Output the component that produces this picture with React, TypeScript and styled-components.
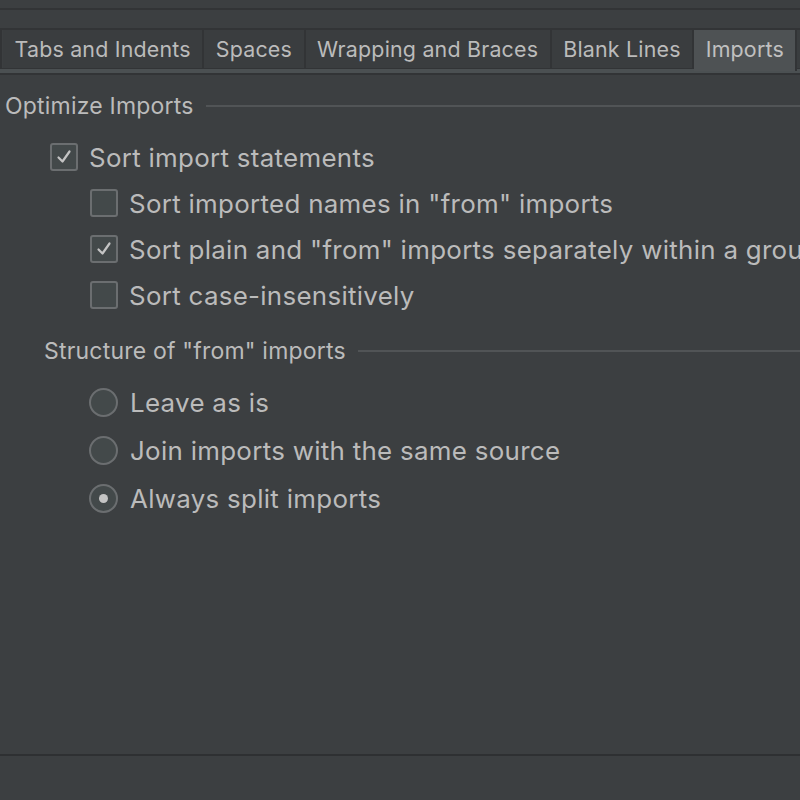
import styled, { createGlobalStyle } from 'styled-components';

const GlobalStyle = createGlobalStyle`
    html, body {
        margin: 0;
        padding: 0;
        background: #3c3f41;
    }
`;

const tabs = ['Tabs and Indents', 'Spaces', 'Wrapping and Braces', 'Blank Lines', 'Imports', ''];

const sortOptions = [
    { label: 'Sort imported names in "from" imports', checked: false },
    { label: 'Sort plain and "from" imports separately within a group', checked: true },
    { label: 'Sort case-insensitively', checked: false },
];

const structureOptions = [
    { label: 'Leave as is', selected: false },
    { label: 'Join imports with the same source', selected: false },
    { label: 'Always split imports', selected: true },
];

function CheckMark() {
    return (
        <svg width="18" height="18" viewBox="0 0 18 18">
            <path d="M3.5 9.5 L7.5 13.5 L14.5 3.5" fill="none" stroke="#c4c4c4" strokeWidth="2.2" strokeLinecap="round" strokeLinejoin="round" />
        </svg>
    );
}

function App() {
    return (
        <Page>
            <GlobalStyle />
            <TopRule />
            <TabStrip>
                {tabs.map((t, i) => (
                    <Tab key={i} $selected={t === 'Imports'}>{t}</Tab>
                ))}
            </TabStrip>
            <TabUnderline />

            <Content>
                <Group>
                    <GroupTitle>Optimize Imports</GroupTitle>
                    <GroupLine />
                </Group>

                <MainOption>
                    <OptionRow $indent={50}>
                        <CheckBox><CheckMark /></CheckBox>
                        <Label>Sort import statements</Label>
                    </OptionRow>
                </MainOption>
                <SubOptions>
                    {sortOptions.map((o) => (
                        <OptionRow key={o.label} $indent={90}>
                            <CheckBox>{o.checked && <CheckMark />}</CheckBox>
                            <Label>{o.label}</Label>
                        </OptionRow>
                    ))}
                </SubOptions>

                <SubGroup>
                    <GroupTitle>Structure of "from" imports</GroupTitle>
                    <GroupLine />
                </SubGroup>

                <RadioList>
                    {structureOptions.map((o) => (
                        <OptionRow key={o.label} $indent={89}>
                            <Radio>{o.selected && <RadioDot />}</Radio>
                            <Label>{o.label}</Label>
                        </OptionRow>
                    ))}
                </RadioList>
            </Content>

            <BottomRule />
        </Page>
    );
}

const Page = styled.div`
    width: 800px;
    height: 800px;
    overflow: hidden;
    background: #3c3f41;
    color: #bbbbbb;
    font-family: Inter, "Liberation Sans", sans-serif;
    display: flex;
    flex-direction: column;
`;

const TopRule = styled.div`
    margin-top: 8px;
    height: 2px;
    background: #323436;
`;

const TabStrip = styled.div`
    margin-top: 18px;
    display: flex;
    height: 38px;
    border-top: 2px solid #323436;
    padding-left: 1px;
    border-left: 2px solid #323436;
`;

const Tab = styled.div<{ $selected: boolean }>`
    display: flex;
    align-items: center;
    box-sizing: border-box;
    padding: 0 11.5px ${(p) => (p.$selected ? 3 : 0)}px;
    height: ${(p) => (p.$selected ? 41 : 38)}px;
    background: ${(p) => (p.$selected ? '#4e5254' : '#3a3d3f')};
    border-right: 2px solid #323436;
    font-size: 21.4px;
    letter-spacing: 0.2px;
    color: ${(p) => (p.$selected ? '#c0c0c0' : '#bbbbbb')};
    white-space: nowrap;
    flex-shrink: 0;
    min-width: 60px;
    position: relative;
    z-index: 1;
`;

const TabUnderline = styled.div`
    height: 4px;
    background: #4b5052;
    border-top: 1px solid #323436;
    border-bottom: 2px solid #323436;
`;

const Content = styled.div`
    flex: 1;
    display: flex;
    flex-direction: column;
    padding-top: 17px;
`;

const Group = styled.div`
    display: flex;
    align-items: center;
    padding-left: 5px;
    height: 28px;
`;

const SubGroup = styled(Group)`
    padding-left: 44px;
    margin-top: 19px;
`;

const GroupTitle = styled.span`
    font-size: 23px;
    letter-spacing: 0.2px;
    white-space: nowrap;
`;

const GroupLine = styled.div`
    flex: 1;
    height: 2px;
    background: #515456;
    margin-left: 12px;
`;

const MainOption = styled.div`
    margin-top: 14px;
`;

const OptionRow = styled.div<{ $indent: number }>`
    display: flex;
    align-items: center;
    gap: 11px;
    height: 46px;
    padding-left: ${(p) => p.$indent}px;
    white-space: nowrap;
`;

const SubOptions = styled.div`
    display: flex;
    flex-direction: column;
`;

const RadioList = styled.div`
    display: flex;
    flex-direction: column;
    gap: 2px;
    margin-top: 14px;
`;

const Label = styled.span`
    font-size: 25.9px;
    letter-spacing: 0.3px;
`;

const CheckBox = styled.div`
    width: 24px;
    height: 24px;
    flex-shrink: 0;
    border: 2px solid #6b6e70;
    border-radius: 3px;
    background: #43494a;
    display: flex;
    align-items: center;
    justify-content: center;
`;

const Radio = styled.div`
    width: 25px;
    height: 25px;
    flex-shrink: 0;
    border: 2px solid #6b6e70;
    border-radius: 50%;
    background: #43494a;
    display: flex;
    align-items: center;
    justify-content: center;
    margin-right: 1px;
`;

const RadioDot = styled.div`
    width: 9px;
    height: 9px;
    border-radius: 50%;
    background: #c4c4c4;
`;

const BottomRule = styled.div`
    height: 2px;
    background: #2e3032;
    margin-bottom: 44px;
`;

export default App;
